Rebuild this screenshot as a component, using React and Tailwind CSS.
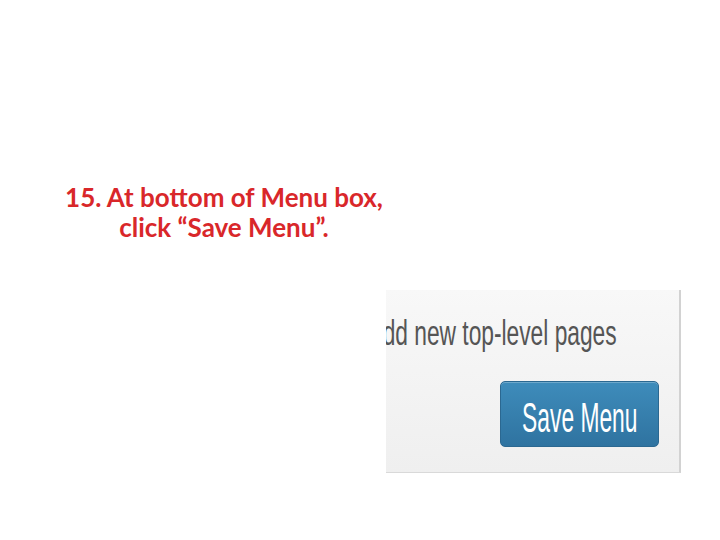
import React from 'react';

const App = () => {
  return (
    <div className="w-[720px] h-[540px] bg-white overflow-hidden flex flex-col">
      {/* Instruction */}
      <div className="w-[448px] pt-[182px] text-center font-['Lato',_'Liberation_Sans',_sans-serif] font-bold text-[26px] leading-[30px] text-[#d9272a]">
        <p>15. At bottom of Menu box,</p>
        <p>click “Save Menu”.</p>
      </div>

      {/* Screenshot crop */}
      <div className="ml-[386px] mt-[48px] w-[295px] h-[188px] flex flex-col">
        <div className="h-[183px] bg-gradient-to-b from-[#f8f8f8] to-[#efefef] border-r-2 border-r-[#d2d2d2] border-b border-b-[#d9d9d9] overflow-hidden flex flex-col">
          <div className="pt-[23px] whitespace-nowrap -ml-[16px]">
            <span className="inline-block origin-left scale-x-[0.65] font-['Liberation_Sans',_sans-serif] text-[35px] leading-[40px] text-[#555555]">
              add new top-level pages
            </span>
          </div>
          <div className="flex justify-end pr-[20px] pt-[28px]">
            <button className="w-[159px] h-[66px] rounded-[5px] border border-[#2b6891] bg-gradient-to-b from-[#3e8cbb] to-[#2f73a0] shadow-[inset_0_1px_0_rgba(255,255,255,0.25)] flex items-center justify-center">
              <span className="inline-block scale-x-[0.53] font-['Liberation_Sans',_sans-serif] text-[43px] leading-[44px] text-white whitespace-nowrap translate-y-[3px]">
                Save Menu
              </span>
            </button>
          </div>
        </div>
      </div>
    </div>
  );
};

export default App;
